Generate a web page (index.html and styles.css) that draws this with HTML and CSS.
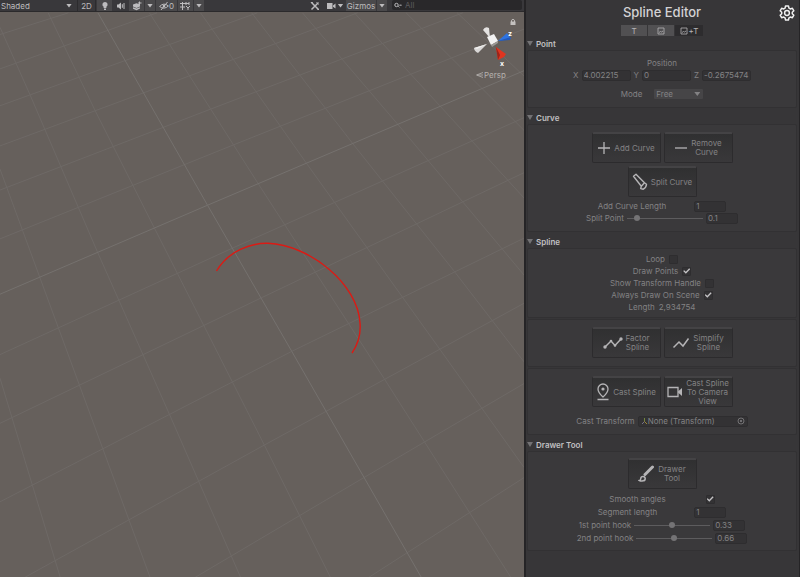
FILE: index.html
```html
<!DOCTYPE html>
<html lang="en">
<head>
<meta charset="utf-8">
<title>Spline Editor</title>
<link rel="stylesheet" href="styles.css">
</head>
<body>
<div class="editor">
  <main class="scene">
    <div class="toolbar">
      <span class="dropdown shading"><select aria-label="Shading mode"><option>Shaded</option></select></span>
      <button class="tool two-d">2D</button>
      <button class="tool on" aria-label="Lighting"><svg width="10" height="10" viewBox="0 0 10 10"><path d="M5 1a2.6 2.6 0 0 0-1.4 4.8V7h2.8V5.800A2.600 2.600 0 0 0 5 1zM4 7.500h2V9H4z" fill="currentColor"/></svg></button>
      <button class="tool" aria-label="Audio"><svg width="10" height="10" viewBox="0 0 10 10"><path d="M1 3.500h1.500L5 1.500v7L2.500 6.500H1z" fill="currentColor"/><path d="M6.300 3.200v3.600M8 2v6" stroke="currentColor" fill="none"/></svg></button>
      <button class="tool on" aria-label="Effects"><svg width="10" height="10" viewBox="0 0 10 10"><path d="M1 3.500l3.500-1.200L8 3.500v2L4.500 7 1 5.500zM1 6.300l3.500 1.300L8 6.300v1.200L4.500 9.200 1 7.700z" fill="currentColor"/><path d="M7.500 .5v3.500M6 2h3.500" stroke="currentColor"/></svg></button>
      <button class="tool on arrow" aria-label="Effects options"></button>
      <button class="tool on hidden-count" aria-label="Hidden objects"><svg width="10" height="10" viewBox="0 0 10 10"><path d="M.6 5.500Q4.800 1 9.400 5Q5 9 .6 5.500zM8.500 1L2 9" fill="none" stroke="currentColor"/><circle cx="5" cy="5" r="1.300" fill="currentColor"/></svg><span>0</span></button>
      <button class="tool on grid" aria-label="Grid"><svg width="11" height="10" viewBox="0 0 11 10"><path d="M2.500 1v8M6 1v3M0 2.500h9M0 6h5M9 1v3M6 5l2 2 2-2M8 7v2" fill="none" stroke="currentColor"/></svg></button>
      <button class="tool on arrow" aria-label="Grid options"></button>
      <span class="spacer"></span>
      <button class="tool wide" aria-label="Component tools"><svg width="10" height="10" viewBox="0 0 10 10"><path d="M1.500 1.500l7 7M8.500 1.500l-7 7" stroke="currentColor" stroke-width="1.500"/><path d="M6.500 1.500l2 2M.8 1.500h2M7.500 8.500h1.500" stroke="currentColor"/></svg></button>
      <button class="tool camera" aria-label="Scene camera"><svg width="9" height="8" viewBox="0 0 9 8"><path d="M0 1h5.500v6H0zM6 3.500l2.500-2v5L6 4.800z" fill="currentColor"/></svg><i class="caret"></i></button>
      <button class="tool on gizmos">Gizmos</button>
      <button class="tool on arrow" aria-label="Gizmo options"></button>
      <label class="search"><svg width="8" height="7" viewBox="0 0 8 7"><circle cx="2.500" cy="3" r="1.700" fill="none" stroke="currentColor"/><path d="M4 4l1.500 1.500M5.500 3h2l-1 1z" stroke="currentColor" stroke-width=".7"/></svg><input type="text" placeholder="All" aria-label="Search scene"></label>
    </div>
    <div class="viewport">
      <svg class="drawing" viewBox="0 0 524 566" preserveAspectRatio="xMinYMin slice">
        <g class="grid-lines" transform="translate(0 -1) scale(.3342 .3617)">
          <path d="M0 1015L181 1568M0 437L450 1568M0 45L90 232L292 667L507 1115L721 1568M144 5L285 276L462 600L791 1200L990 1568M447 5L773 478L1150 1017L1530 1568M600 5L917 421L1316 935L1568 1262M753 5L1055 366L1357 717L1568 970M905 5L1190 313L1568 730M1060 5L1316 262L1568 517M1215 5L1568 330M1368 5L1568 180"/>
          <path d="M0 65L205 5M0 160L470 5M0 262L770 5M0 373L565 180L1070 5M0 495L631 271L1385 5M0 630L699 370L1568 50M0 950L697 655L1568 295M0 1140L782 793L1568 447M0 1357L873 941L1568 628M70 1568L791 1200L1568 808M580 1568L1087 1291L1568 1030M1100 1568L1568 1290"/>
          <path class="axis" d="M293 5L621 537L873 941L1262 1568M0 783L621 537L1568 165"/>
        </g>
        <path class="spline" d="M216.500 259C229 238 252 231 268 231.300C310 233 358 272 360 311C361 322 358 332 352 341"/>
      </svg>
      <div class="gizmo">
        <svg class="lock" width="6" height="8" viewBox="0 0 6 8"><path d="M1.500 4V2.300q1.500-2 3 0V4" fill="none" stroke="currentColor"/><path d="M.5 3.500h5v3.500h-5z" fill="currentColor"/></svg>
        <svg width="40" height="44" viewBox="0 0 40 44">
          <path d="M16 12L9 4Q11 0 15 2z" fill="#e4e2e1"/><path d="M13 18L4 27Q0 25 0 22z" fill="#d9d7d6"/><path d="M0 22L13 18L3 23z" fill="#f1f0ef"/>
          <path d="M24 15L33 7L37 13z" fill="#2e73e0"/><path d="M24 15L37 11L36 14z" fill="#2159bb"/>
          <path d="M22 21L32 28L30 31L24 34z" fill="#df3420"/><path d="M22 21L26 29L24 34z" fill="#9d2419"/>
          <path d="M13 11l7-3 4 7-7 4z" fill="#f3f2f2"/><path d="M17 19l7-4v2l-6 4z" fill="#9b9896"/>
          <text x="34" y="10">z</text><text x="26" y="40">x</text>
        </svg>
        <button class="persp"><svg width="7" height="6" viewBox="0 0 7 6"><path d="M7 .5L.5 3L7 5.500M1 3h6" fill="none" stroke="currentColor" stroke-width=".8"/></svg>Persp</button>
      </div>
    </div>
  </main>

  <aside class="inspector">
    <header class="heading">
      <h1>Spline Editor</h1>
      <button class="settings" aria-label="Settings"><svg width="16" height="16" viewBox="0 0 24 24" fill="none" stroke="currentColor" stroke-width="2.200" stroke-linejoin="round"><path d="M9.800 1.500h4.400l.7 3.200 2 1.200 3.200-1 2.200 3.800-2.400 2.200v2.200l2.400 2.200-2.200 3.800-3.200-1-2 1.200-.7 3.200H9.800l-.7-3.200-2-1.200-3.200 1-2.200-3.800 2.400-2.200v-2.200L1.700 8.700l2.200-3.800 3.200 1 2-1.200z"/><circle cx="12" cy="12" r="3.600"/></svg></button>
    </header>
    <div class="tabs">
      <button>T</button>
      <button aria-label="Images"><svg width="8" height="8" viewBox="0 0 8 8"><path d="M1 1h6v6H1zM2 5.500l1.500-1 1 .5L6 4" fill="none" stroke="currentColor" stroke-width=".8"/></svg></button>
      <button class="active"><svg width="8" height="8" viewBox="0 0 8 8"><path d="M1 1h6v6H1zM2 5.500l1.500-1 1 .5L6 4" fill="none" stroke="currentColor" stroke-width=".8"/></svg>+T</button>
    </div>

    <h2>Point</h2>
    <section class="box point">
      <div class="row">Position</div>
      <div class="row vector">
        <label for="px">X</label><input id="px" type="text" value="4.002215">
        <label for="py">Y</label><input id="py" type="text" value="0">
        <label for="pz">Z</label><input id="pz" type="text" value="-0.2675474">
      </div>
      <div class="row mode"><label for="mode">Mode</label><span class="dropdown"><select id="mode"><option>Free</option></select></span></div>
    </section>

    <h2>Curve</h2>
    <section class="box curve">
      <div class="actions">
        <button><svg width="14" height="14" viewBox="0 0 14 14"><path d="M7 1v12M1 7h12" stroke="currentColor" stroke-width="1.300"/></svg><span>Add Curve</span></button>
        <button><svg width="14" height="14" viewBox="0 0 14 14"><path d="M1 7h12" stroke="currentColor" stroke-width="1.300"/></svg><span>Remove<br>Curve</span></button>
        <button><svg width="16" height="18" viewBox="0 0 16 18"><path d="M1.500 3.200L4 1.200L12.500 9.800L9.300 13.300zM9.300 13.300l3.200-3.500l2 1.400q-.2 3.200-3.200 5l-2.600-.6z" fill="none" stroke="currentColor" stroke-width="1.400" stroke-linejoin="round"/></svg><span>Split Curve</span></button>
      </div>
      <div class="row spread"><label for="len">Add Curve Length</label><input id="len" class="short" type="text" value="1"></div>
      <div class="row slider"><label for="split">Split Point</label><input id="split" type="range" min="0" max="1" step="0.01" value="0.1"><input type="text" aria-label="Split Point value" value="0.1"></div>
    </section>

    <h2>Spline</h2>
    <section class="box flags">
      <div class="row"><label for="loop">Loop</label><input id="loop" type="checkbox"></div>
      <div class="row"><label for="points">Draw Points</label><input id="points" type="checkbox" checked></div>
      <div class="row"><label for="handle">Show Transform Handle</label><input id="handle" type="checkbox"></div>
      <div class="row"><label for="always">Always Draw On Scene</label><input id="always" type="checkbox" checked></div>
      <div class="row"><span>Length</span><span>2,934754</span></div>
    </section>
    <section class="box">
      <div class="actions">
        <button><svg width="20" height="14" viewBox="0 0 20 14"><path d="M2 11L8 5l4 4.500L18 3" fill="none" stroke="currentColor" stroke-width="1.500"/><g fill="currentColor"><circle cx="2" cy="11" r="1.700"/><circle cx="8" cy="5" r="1.300"/><circle cx="12" cy="9.500" r="1.300"/><circle cx="18" cy="3" r="1.700"/></g></svg><span>Factor<br>Spline</span></button>
        <button><svg width="18" height="14" viewBox="0 0 18 14"><path d="M1.500 11.500L7 6l4 4L16.500 2.500" fill="none" stroke="currentColor" stroke-width="1.500"/></svg><span>Simplify<br>Spline</span></button>
      </div>
    </section>
    <section class="box cast">
      <div class="actions">
        <button><svg width="14" height="18" viewBox="0 0 14 18"><path d="M7 14Q2 9.500 2 6a5 5 0 0 1 10 0Q12 9.500 7 14zM1.500 16.500h11" fill="none" stroke="currentColor" stroke-width="1.300"/><circle cx="7" cy="6" r="1.600" fill="currentColor"/></svg><span>Cast Spline</span></button>
        <button><svg width="16" height="12" viewBox="0 0 16 12"><path d="M1 1.500h10v9H1z" fill="none" stroke="currentColor" stroke-width="1.300"/><path d="M11 5.500L15 2v8l-4-3.500z" fill="currentColor"/></svg><span>Cast Spline<br>To Camera<br>View</span></button>
      </div>
      <div class="row"><span>Cast Transform</span><button class="object" aria-label="Cast Transform: None (Transform)"><svg width="7" height="8" viewBox="0 0 7 8"><path d="M3.500 1v3.500" stroke="#71853c"/><path d="M3.500 4.500L1 7" stroke="#77738a"/><path d="M3.500 4.500L6 7" stroke="#9c8432"/></svg><span>None (Transform)</span><svg width="8" height="8" viewBox="0 0 8 8"><circle cx="4" cy="4" r="3" fill="none" stroke="currentColor" stroke-width=".8"/><circle cx="4" cy="4" r="1" fill="currentColor"/></svg></button></div>
    </section>

    <h2>Drawer Tool</h2>
    <section class="box drawer">
      <div class="actions">
        <button><svg width="17" height="18" viewBox="0 0 17 18"><path d="M7 9.500L14.500 2" stroke="currentColor" stroke-width="3" stroke-linecap="round"/><path d="M1.500 15.500q1.200-.3 1.300-2a2.200 2.200 0 1 1 2.200 2.300q-2 .6-3.500-.3z" fill="none" stroke="currentColor" stroke-width="1.500"/></svg><span>Drawer<br>Tool</span></button>
      </div>
      <div class="row smooth"><label for="smooth">Smooth angles</label><input id="smooth" type="checkbox" checked></div>
      <div class="row segment"><label for="seg">Segment length</label><input id="seg" class="short" type="text" value="1"></div>
      <div class="row slider"><label for="h1">1st point hook</label><input id="h1" type="range" min="0" max="0.66" step="0.01" value="0.33"><input type="text" aria-label="1st point hook value" value="0.33"></div>
      <div class="row slider"><label for="h2">2nd point hook</label><input id="h2" type="range" min="0" max="1.32" step="0.01" value="0.66"><input type="text" aria-label="2nd point hook value" value="0.66"></div>
    </section>
  </aside>
</div>
</body>
</html>
```
FILE: styles.css
```css
* { box-sizing: border-box; }

body {
  margin: 0;
  background: #39383a;
  color: #838284;
  font: 8px/12px Inter, "Liberation Sans", sans-serif;
}

button, input, select {
  margin: 0;
  padding: 0;
  border: 0;
  border-radius: 0;
  background: none;
  color: inherit;
  font: inherit;
  appearance: none;
}

svg { display: block; flex: none; }

.editor {
  display: grid;
  grid-template-columns: 1fr 276px;
  min-height: 100vh;
}

.scene {
  display: flex;
  flex-direction: column;
  min-width: 0;
}

/* Scene toolbar */
.toolbar {
  display: flex;
  gap: 1px;
  height: 12px;
  background: #39383b;
  border-bottom: 1px solid #2b2a2c;
  color: #bdbcbe;
  line-height: 10px;
}

.tool {
  display: flex;
  align-items: center;
  justify-content: center;
  width: 15px;
  background: #39383b;
}

.on { background: #4a494b; }
.two-d { width: 19px; border: solid #2c2b2d; border-width: 0 1px; }
.hidden-count { width: 21px; }
.grid { width: 15px; }
.arrow { width: 10px; }
.wide { width: 18px; }
.camera { width: 20px; gap: 2px; }
.gizmos { width: 30px; }

.arrow::after, .caret, .dropdown::after {
  content: "";
  flex: none;
  width: 6px;
  height: 4px;
  background: currentColor;
  clip-path: polygon(0 0, 100% 0, 50% 100%);
}

.dropdown {
  display: flex;
  align-items: center;
}

.dropdown select { flex: 1; min-width: 0; }
.shading { width: 76px; padding: 0 4px 0 1px; }
.spacer { flex: 1; }

.search {
  display: flex;
  align-items: center;
  gap: 3px;
  width: 130px;
  margin: 0 2px 1px 4px;
  padding-left: 2px;
  border-radius: 2px;
  background: #29282a;
}

.search input { width: 90%; min-width: 0; }
.search input::placeholder { color: #5d5c5e; }

/* Viewport */
.viewport {
  position: relative;
  flex: 1;
  overflow: hidden;
  background: #66605c;
}

.drawing {
  position: absolute;
  width: 100%;
  height: 100%;
}

.grid-lines path {
  fill: none;
  stroke: #6e6966;
  stroke-width: 1px;
  vector-effect: non-scaling-stroke;
}

.grid-lines .axis { stroke: #75716e; }

.spline {
  fill: none;
  stroke: #dc1a14;
  stroke-width: 1.4;
}

.gizmo {
  position: absolute;
  top: 6px;
  right: 8px;
  display: flex;
  flex-direction: column;
  width: 42px;
  color: #c4c1bf;
}

.gizmo .lock { align-self: flex-end; }
.gizmo text { fill: #fff; font: bold 7px Inter, sans-serif; }

.persp {
  display: flex;
  align-items: center;
  gap: 1px;
  padding-left: 2px;
  color: #b5b1ae;
  line-height: 10px;
}

/* Inspector */
.inspector {
  border: solid #252426;
  border-width: 0 1px 0 2px;
  padding: 0 2px 0 1px;
  background: #373638;
}

.heading {
  display: grid;
  grid-template-columns: 1fr auto 1fr;
  align-items: start;
  height: 25px;
  color: #d3d2d4;
}

.heading h1 {
  grid-column: 2;
  margin: 0;
  font-size: 13px;
  font-weight: 500;
  line-height: 24px;
}

.settings { justify-self: end; margin: 5px 2px 0 0; color: #f0f0f0; }

.tabs {
  display: flex;
  justify-content: center;
  gap: 1px;
  height: 12px;
}

.tabs button {
  display: flex;
  align-items: center;
  justify-content: center;
  gap: 1px;
  width: 26px;
  height: 11px;
  background: #515052;
  color: #b5b4b6;
}

.tabs .active { width: 28px; background: #2d2c2e; }

h2 {
  display: flex;
  align-items: center;
  gap: 3px;
  height: 13px;
  margin: 0;
  color: #c1c0c2;
  font-size: 8px;
  font-weight: 600;
}

h2::before {
  content: "";
  width: 6px;
  height: 5px;
  background: #737274;
  clip-path: polygon(0 0, 100% 0, 50% 100%);
}

.box {
  display: flex;
  flex-direction: column;
  padding: 7px 0 8px;
  border: 1px solid #323133;
  border-radius: 2px;
  background: #3a393b;
}

.box + h2 { margin-top: 3px; }
.box + .box { margin-top: 1px; }

.row {
  display: flex;
  align-items: center;
  justify-content: center;
  gap: 4px;
  height: 12px;
}

input[type="text"] { min-width: 0; }

.row input[type="text"] {
  width: 32px;
  height: 11px;
  padding: 0 1px;
  border: 1px solid #2e2d2f;
  border-radius: 2px;
  background: #333234;
}

.row .short { width: 34px; }
.point { padding: 6px 0 7px; }
.vector { gap: 3px; }
.row.vector input { width: 49px; }
.row.mode { gap: 12px; margin-top: 7px; }

.mode .dropdown {
  width: 49px;
  height: 10px;
  padding: 0 3px 0 2px;
  border-radius: 1px;
  background: #464547;
}

.mode select { line-height: 10px; }

.actions {
  display: flex;
  flex-wrap: wrap;
  justify-content: center;
  gap: 3px;
  padding: 0 50px;
}

.actions button {
  display: flex;
  align-items: center;
  justify-content: center;
  gap: 3px;
  width: 69px;
  height: 31px;
  border: 1px solid #2c2b2d;
  border-top: 2px solid #444345;
  border-radius: 2px;
  background: linear-gradient(#303031, #39383a);
  line-height: 9px;
}

.actions svg { color: #b5b4b6; }

.curve .actions { padding-bottom: 3px; }
.curve { padding-bottom: 7px; }
.spread { gap: 28px; }
.slider { gap: 3px; }

input[type="range"] {
  width: 76px;
  height: 8px;
}

input[type="range"]::-webkit-slider-runnable-track {
  height: 1px;
  background: #5d5c5e;
}

input[type="range"]::-webkit-slider-thumb {
  width: 6px;
  height: 6px;
  margin-top: -3px;
  border-radius: 50%;
  background: #747375;
  appearance: none;
}

input[type="checkbox"] {
  display: grid;
  place-items: center;
  width: 9px;
  height: 9px;
  border: 1px solid #2e2d2f;
  border-radius: 1px;
  background: #333234;
}

input[type="checkbox"]:checked::after {
  content: "";
  width: 7px;
  height: 6px;
  background: #c4c3c5;
  clip-path: polygon(0 50%, 14% 36%, 38% 64%, 86% 4%, 100% 20%, 38% 94%);
}

.flags { padding: 4px 0; }
.cast { padding-bottom: 7px; }
.cast .row { gap: 3px; margin-top: 8px; }

.object {
  display: flex;
  align-items: center;
  gap: 0;
  width: 110px;
  height: 11px;
  padding: 0 2px;
  border: 1px solid #2e2d2f;
  border-radius: 2px;
  background: #333234;
  line-height: 9px;
}

.object span { flex: 1; text-align: left; }

.drawer { padding: 6px 0; }
.drawer .actions { padding-bottom: 4px; }
.smooth { gap: 40px; }
.segment { gap: 37px; }
.drawer .row + .row { margin-top: 1px; }
```
